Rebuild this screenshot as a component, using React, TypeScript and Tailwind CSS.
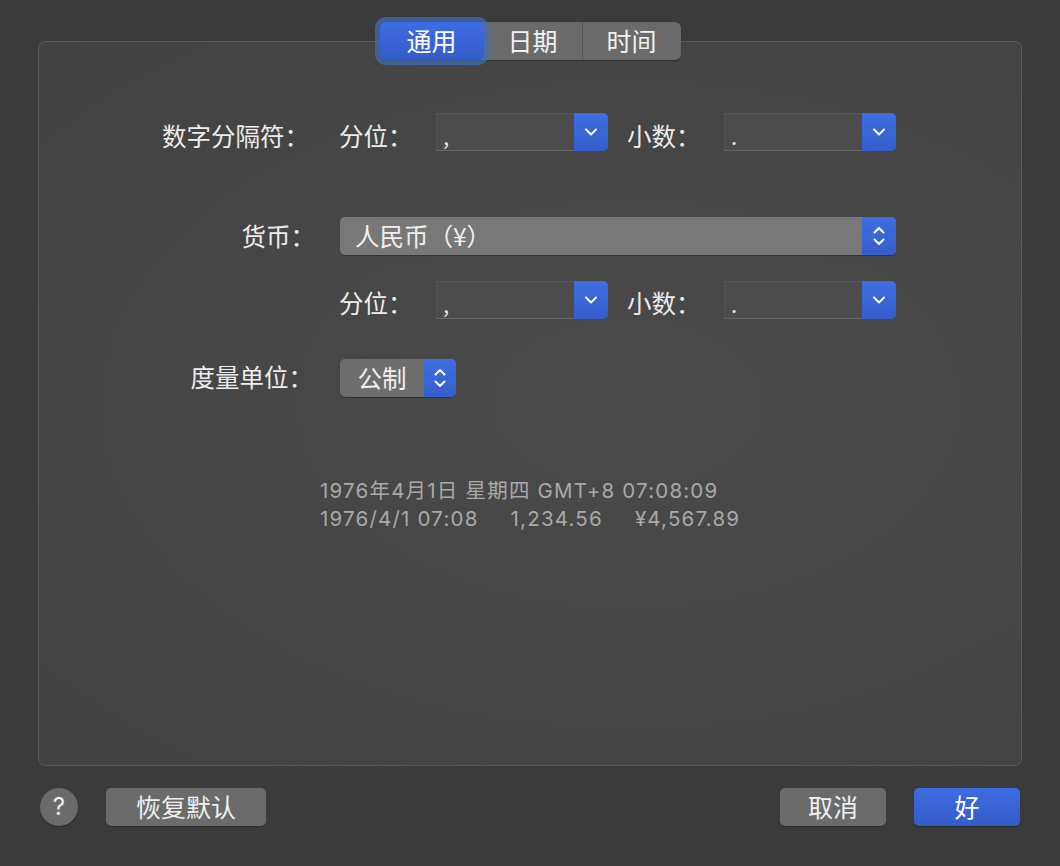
import React from "react";

const font = { fontFamily: '"Noto Sans CJK SC", "Noto Sans", sans-serif' };
const numFont = { fontFamily: 'Inter, "Noto Sans CJK SC", sans-serif' };

function ChevronDown() {
  return (
    <svg width="14" height="10" viewBox="0 0 14 10" fill="none">
      <path d="M2 2.5 L7 7.5 L12 2.5" stroke="white" strokeWidth="2" strokeLinecap="round" strokeLinejoin="round" />
    </svg>
  );
}

function UpDown() {
  return (
    <svg width="14" height="24" viewBox="0 0 14 24" fill="none">
      <path d="M2.5 8.5 L7 4 L11.5 8.5" stroke="white" strokeWidth="2" strokeLinecap="round" strokeLinejoin="round" />
      <path d="M2.5 15.5 L7 20 L11.5 15.5" stroke="white" strokeWidth="2" strokeLinecap="round" strokeLinejoin="round" />
    </svg>
  );
}

function ComboField({ value }: { value: string }) {
  return (
    <div className="flex h-[38px] w-[172px]">
      <div className="flex-1 flex items-center pl-[6px] bg-[#4c4c4c] border-t border-t-[#5a5a5a] border-b border-b-[#666] border-l border-l-[#555] text-[#e6e6e6] text-[22px] leading-none pt-[6px]">
        {value}
      </div>
      <div className="w-[34px] flex items-center justify-center rounded-r-[5px] bg-gradient-to-b from-[#3e6ee2] to-[#355ecc]">
        <ChevronDown />
      </div>
    </div>
  );
}

function Label({ children }: { children: React.ReactNode }) {
  return <span className="text-[#ededed] text-[24.5px] leading-none">{children}</span>;
}

export default function App() {
  return (
    <div style={font} className="w-[1060px] h-[866px] bg-[#3b3b3b] flex flex-col items-center pt-[22px] overflow-hidden">
      {/* Tabs */}
      <div className="relative z-10 flex h-[38px] rounded-[6px] bg-[#6a6a6a] shadow-[0_1px_1px_rgba(0,0,0,0.3)]">
        <div className="w-[104px] flex items-center justify-center rounded-[6px] bg-gradient-to-b from-[#3e6ce2] to-[#345cc9] text-white text-[25px] ring-[5px] ring-[#3f6fb8]/70">
          通用
        </div>
        <div className="w-[99px] flex items-center justify-center text-[#f0f0f0] text-[25px] border-r border-r-[#555]">
          日期
        </div>
        <div className="w-[98px] flex items-center justify-center text-[#f0f0f0] text-[25px]">
          时间
        </div>
      </div>

      {/* Panel */}
      <div className="-mt-[19px] w-[984px] h-[725px] rounded-[7px] border border-[#5a5a5a] bg-[radial-gradient(ellipse_at_60%_50%,#4a4a4a,#424242)] pt-[71px] flex flex-col">
        {/* Row 1 */}
        <div className="flex items-center h-[38px]">
          <div className="w-[270px] text-right pt-[10px]">
            <Label>数字分隔符：</Label>
          </div>
          <div className="ml-[30px] w-[97px] pt-[10px]"><Label>分位：</Label></div>
          <ComboField value="," />
          <div className="ml-[19px] w-[97px] pt-[10px]"><Label>小数：</Label></div>
          <ComboField value="." />
        </div>

        {/* Row 2 */}
        <div className="flex items-center h-[38px] mt-[66px]">
          <div className="w-[276px] text-right pt-[2px]">
            <Label>货币：</Label>
          </div>
          <div className="ml-[25px] w-[556px] h-[38px] flex rounded-[5px] bg-[#787878] shadow-[0_1px_1px_rgba(0,0,0,0.3)]">
            <div className="flex-1 flex items-center pl-[15px] text-[#f0f0f0] text-[24.5px]">人民币（¥）</div>
            <div className="w-[34px] flex items-center justify-center rounded-r-[5px] bg-gradient-to-b from-[#3e6ee2] to-[#355ecc]">
              <UpDown />
            </div>
          </div>
        </div>

        {/* Row 3 */}
        <div className="flex items-center h-[38px] mt-[26px]">
          <div className="w-[270px]" />
          <div className="ml-[30px] w-[97px] pt-[8px]"><Label>分位：</Label></div>
          <ComboField value="," />
          <div className="ml-[19px] w-[97px] pt-[8px]"><Label>小数：</Label></div>
          <ComboField value="." />
        </div>

        {/* Row 4 */}
        <div className="flex items-center h-[38px] mt-[40px]">
          <div className="w-[274px] text-right">
            <Label>度量单位：</Label>
          </div>
          <div className="ml-[27px] w-[116px] h-[38px] flex rounded-[5px] bg-[#6e6e6e] shadow-[0_1px_1px_rgba(0,0,0,0.3)]">
            <div className="flex-1 flex items-center justify-center text-[#f0f0f0] text-[24.5px]">公制</div>
            <div className="w-[32px] flex items-center justify-center rounded-r-[5px] bg-gradient-to-b from-[#3e6ee2] to-[#355ecc]">
              <UpDown />
            </div>
          </div>
        </div>

        {/* Sample text */}
        <div style={numFont} className="mt-[80px] ml-[281px] text-[#a9a9a9] text-[20.5px] tracking-[1.2px] leading-[28px]">
          <div>1976年4月1日 星期四 GMT+8 07:08:09</div>
          <div className="flex">
            <span>1976/4/1 07:08</span>
            <span className="ml-[32px]">1,234.56</span>
            <span className="ml-[32px]">¥4,567.89</span>
          </div>
        </div>
      </div>

      {/* Footer */}
      <div className="w-[980px] mt-[22px] flex items-center">
        <div className="w-[38px] h-[38px] rounded-full bg-[#6b6b6b] flex items-center justify-center text-[#f0f0f0] text-[24px] shadow-[0_1px_1px_rgba(0,0,0,0.3)]" style={numFont}>?</div>
        <div className="ml-[28px] w-[160px] h-[38px] rounded-[5px] bg-[#6b6b6b] flex items-center justify-center text-[#f0f0f0] text-[25px] shadow-[0_1px_1px_rgba(0,0,0,0.3)]">恢复默认</div>
        <div className="flex-1" />
        <div className="w-[106px] h-[38px] rounded-[5px] bg-[#6b6b6b] flex items-center justify-center text-[#f0f0f0] text-[25px] shadow-[0_1px_1px_rgba(0,0,0,0.3)]">取消</div>
        <div className="ml-[28px] w-[106px] h-[38px] rounded-[5px] bg-gradient-to-b from-[#3e6ce2] to-[#345cc9] flex items-center justify-center text-white text-[25px] shadow-[0_1px_1px_rgba(0,0,0,0.3)]">好</div>
      </div>
    </div>
  );
}
